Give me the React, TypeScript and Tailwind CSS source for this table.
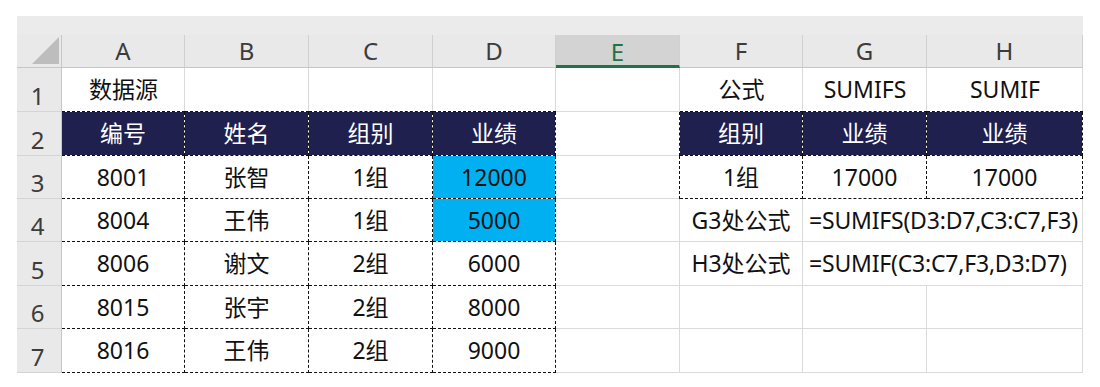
import React from "react";

type Kind = "plain" | "head" | "cyan";
type Edge = "grid" | "dash" | "dashB" | "dashR";

interface Cell {
  text?: string;
  kind?: Kind;
  edge?: Edge;
  span?: boolean;
  left?: boolean;
}

const COLS = ["A", "B", "C", "D", "E", "F", "G", "H"];

const ROWS: Cell[][] = [
  [
    { text: "数据源", edge: "dashB" },
    { edge: "dashB" },
    { edge: "dashB" },
    { edge: "dashB" },
    { edge: "grid" },
    { text: "公式", edge: "dashB" },
    { text: "SUMIFS", edge: "dashB" },
    { text: "SUMIF", edge: "dashB" },
  ],
  [
    { text: "编号", kind: "head", edge: "dash" },
    { text: "姓名", kind: "head", edge: "dash" },
    { text: "组别", kind: "head", edge: "dash" },
    { text: "业绩", kind: "head", edge: "dash" },
    { edge: "dashR" },
    { text: "组别", kind: "head", edge: "dash" },
    { text: "业绩", kind: "head", edge: "dash" },
    { text: "业绩", kind: "head", edge: "dash" },
  ],
  [
    { text: "8001", edge: "dash" },
    { text: "张智", edge: "dash" },
    { text: "1组", edge: "dash" },
    { text: "12000", kind: "cyan", edge: "dash" },
    { edge: "dashR" },
    { text: "1组", edge: "dash" },
    { text: "17000", edge: "dash" },
    { text: "17000", edge: "dash" },
  ],
  [
    { text: "8004", edge: "dash" },
    { text: "王伟", edge: "dash" },
    { text: "1组", edge: "dash" },
    { text: "5000", kind: "cyan", edge: "dash" },
    { edge: "grid" },
    { text: "G3处公式", edge: "grid" },
    { text: "=SUMIFS(D3:D7,C3:C7,F3)", edge: "grid", span: true, left: true },
  ],
  [
    { text: "8006", edge: "dash" },
    { text: "谢文", edge: "dash" },
    { text: "2组", edge: "dash" },
    { text: "6000", edge: "dash" },
    { edge: "grid" },
    { text: "H3处公式", edge: "grid" },
    { text: "=SUMIF(C3:C7,F3,D3:D7)", edge: "grid", span: true, left: true },
  ],
  [
    { text: "8015", edge: "dash" },
    { text: "张宇", edge: "dash" },
    { text: "2组", edge: "dash" },
    { text: "8000", edge: "dash" },
    { edge: "grid" },
    { edge: "grid" },
    { edge: "grid" },
    { edge: "grid" },
  ],
  [
    { text: "8016", edge: "dash" },
    { text: "王伟", edge: "dash" },
    { text: "2组", edge: "dash" },
    { text: "9000", edge: "dash" },
    { edge: "grid" },
    { edge: "grid" },
    { edge: "grid" },
    { edge: "grid" },
  ],
];

const edgeClass = (edge: Edge) => {
  if (edge === "dash") return "border-r border-b border-dashed border-[#111]";
  if (edge === "dashB")
    return "border-b border-dashed border-[#111] shadow-[inset_-1px_0_0_#dadada]";
  if (edge === "dashR")
    return "border-r border-dashed border-[#111] shadow-[inset_0_-1px_0_#dadada]";
  return "border-r border-b border-[#dadada]";
};

const kindClass = (kind: Kind = "plain") => {
  if (kind === "head") return "bg-[#20204f] bg-clip-padding text-white";
  if (kind === "cyan") return "bg-[#00b0f0] bg-clip-padding text-[#111]";
  return "bg-white text-[#111]";
};

const Corner = () => (
  <div className="flex items-end justify-end border-r border-b border-[#c6c6c6] bg-[#e9e9e9] pr-[2px] pb-[3px]">
    <svg width="27" height="27" viewBox="0 0 27 27">
      <polygon points="27,0 27,27 0,27" fill="#bdbdbd" />
    </svg>
  </div>
);

const App = () => {
  return (
    <div
      className="h-[387px] w-[1100px] overflow-hidden bg-white pt-[16px] pl-[17px]"
      style={{ fontFamily: '"Noto Sans", "Noto Sans CJK SC", sans-serif' }}
    >
      <div className="h-[19px] w-[1066px] bg-[#ebebeb]" />
      <div className="grid w-[1066px] grid-cols-[45px_123px_124px_124px_123px_124px_123px_124px_156px] grid-rows-[33px_44px_44px_43px_43px_44px_43px_44px]">
        <Corner />
        {COLS.map((c) =>
          c === "E" ? (
            <div
              key={c}
              className="flex items-end justify-center border-r border-b-[3px] border-r-[#d0d0d0] border-b-[#217346] bg-[#d3d3d3] pb-[1px] text-[24px] leading-none text-[#217346]"
            >
              {c}
            </div>
          ) : (
            <div
              key={c}
              className="flex items-end justify-center border-r border-b border-r-[#d0d0d0] border-b-[#c6c6c6] bg-[#e9e9e9] pb-[4px] text-[24px] leading-none text-[#3c3c3c]"
            >
              {c}
            </div>
          )
        )}
        {ROWS.map((row, r) => (
          <React.Fragment key={r}>
            <div className="flex items-end justify-center border-r border-b border-r-[#c6c6c6] border-b-[#d4d4d4] bg-[#e9e9e9] pr-[3px] pb-[3px] text-[24px] leading-none text-[#3c3c3c]">
              {r + 1}
            </div>
            {row.map((cell, i) => (
              <div
                key={i}
                className={`flex items-center whitespace-nowrap text-[23px] leading-none ${
                  cell.span ? "col-span-2 tracking-[-0.2px]" : ""
                } ${cell.left ? "justify-start pl-[6px]" : "justify-center"} ${kindClass(
                  cell.kind
                )} ${edgeClass(cell.edge ?? "grid")}`}
              >
                {cell.text}
              </div>
            ))}
          </React.Fragment>
        ))}
      </div>
    </div>
  );
};

export default App;
